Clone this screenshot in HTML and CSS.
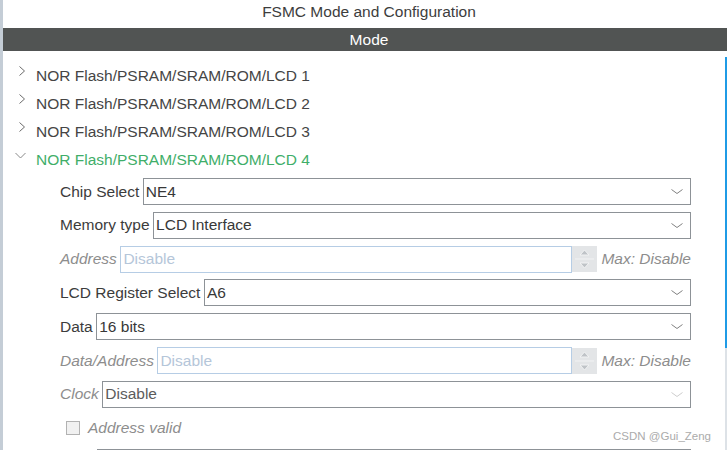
FILE: index.html
```html
<!DOCTYPE html>
<html lang="en">
<head>
  <meta charset="UTF-8">
  <title>FSMC Mode and Configuration</title>
  <link rel="stylesheet" href="styles.css">
</head>
<body>

<div class="panel">
  <div class="title">FSMC Mode and Configuration</div>
  <div class="bar">Mode</div>

  <div class="main">
    <div class="content">
      <ul class="tree">
        <li class="node">
          <svg class="caret" viewBox="0 0 12 12"><polyline points="4.5,0.5 9.5,5 4.5,9.5"/></svg>
          NOR Flash/PSRAM/SRAM/ROM/LCD 1
        </li>
        <li class="node">
          <svg class="caret" viewBox="0 0 12 12"><polyline points="4.5,0.5 9.5,5 4.5,9.5"/></svg>
          NOR Flash/PSRAM/SRAM/ROM/LCD 2
        </li>
        <li class="node">
          <svg class="caret" viewBox="0 0 12 12"><polyline points="4.5,0.5 9.5,5 4.5,9.5"/></svg>
          NOR Flash/PSRAM/SRAM/ROM/LCD 3
        </li>
        <li class="node open">
          <svg class="caret" viewBox="0 0 12 12"><polyline points="0.5,3 5.5,8 10.5,3"/></svg>
          NOR Flash/PSRAM/SRAM/ROM/LCD 4
        </li>
      </ul>

      <div class="form">
        <div class="row">
          <span class="label">Chip Select</span>
          <div class="select"><span>NE4</span><svg class="arrow" viewBox="0 0 12 5"><polyline points="0.5,0.5 6,4.5 11.5,0.5"/></svg></div>
        </div>
        <div class="row">
          <span class="label">Memory type</span>
          <div class="select"><span>LCD Interface</span><svg class="arrow" viewBox="0 0 12 5"><polyline points="0.5,0.5 6,4.5 11.5,0.5"/></svg></div>
        </div>
        <div class="row off">
          <span class="label">Address</span>
          <div class="input">Disable</div>
          <div class="spin">
            <svg viewBox="0 0 25 26"><polygon points="8,9 17,9 12.5,4"/><line x1="3" y1="13" x2="22" y2="13"/><polygon points="8,17 17,17 12.5,22"/></svg>
          </div>
          <span class="max">Max: Disable</span>
        </div>
        <div class="row">
          <span class="label">LCD Register Select</span>
          <div class="select"><span>A6</span><svg class="arrow" viewBox="0 0 12 5"><polyline points="0.5,0.5 6,4.5 11.5,0.5"/></svg></div>
        </div>
        <div class="row">
          <span class="label">Data</span>
          <div class="select"><span>16 bits</span><svg class="arrow" viewBox="0 0 12 5"><polyline points="0.5,0.5 6,4.5 11.5,0.5"/></svg></div>
        </div>
        <div class="row off">
          <span class="label">Data/Address</span>
          <div class="input">Disable</div>
          <div class="spin">
            <svg viewBox="0 0 25 26"><polygon points="8,9 17,9 12.5,4"/><line x1="3" y1="13" x2="22" y2="13"/><polygon points="8,17 17,17 12.5,22"/></svg>
          </div>
          <span class="max">Max: Disable</span>
        </div>
        <div class="row off">
          <span class="label">Clock</span>
          <div class="select"><span>Disable</span><svg class="arrow" viewBox="0 0 12 5"><polyline points="0.5,0.5 6,4.5 11.5,0.5"/></svg></div>
        </div>
        <div class="row off">
          <span class="check"></span>
          <span class="label">Address valid</span>
        </div>
        <!-- next field, only its top edge shows -->
        <div class="row">
          <span class="label spacer"></span>
          <div class="select"></div>
        </div>
      </div>
    </div>

    <div class="scroll"><div class="thumb"></div></div>
  </div>

  <div class="mark">CSDN @Gui_Zeng</div>
</div>

</body>
</html>
```

FILE: styles.css
```css
body {
  margin: 0;
  font-family: "Liberation Sans", Arial, sans-serif;
  font-size: 15.5px;
  color: #3c3c3c;
  background: #fff;
  overflow: hidden;
}

.panel {
  position: relative;
  height: 450px;
  overflow: hidden;
  border-left: 3px solid #c4cdd6;
}

.title {
  height: 28px;
  line-height: 24px;
  padding-left: 8px;
  text-align: center;
  color: #3d3d3d;
}

.bar {
  height: 23px;
  line-height: 23px;
  padding-left: 8px;
  text-align: center;
  background: #515453;
  color: #fff;
}

.main {
  display: flex;
}

.content {
  flex: 1;
  padding: 11px 34px 0 0;
}

/* tree */
.tree {
  list-style: none;
  margin: 0;
  padding: 0;
}

.node {
  display: flex;
  align-items: center;
  height: 28px;
  color: #454545;
}

.caret {
  width: 12px;
  height: 12px;
  margin: 0 9px 8px 12px;
  fill: none;
  stroke: #6b6b6b;
  stroke-width: 1;
}

.node.open {
  color: #3fae69;
}

.node.open .caret {
  stroke: #8a8a8a;
}

/* form */
.form {
  margin-top: 4px;
  padding-left: 57px;
}

.row {
  display: flex;
  align-items: center;
  height: 27px;
  margin-bottom: 6.83px;
}

.label {
  margin-right: 3.5px;
  white-space: nowrap;
}

.spacer {
  width: 33px;
}

.select, .input {
  flex: 1;
  display: flex;
  align-items: center;
  height: 27px;
  box-sizing: border-box;
  padding: 0 7px 0 2px;
  border: 1px solid #8d9297;
  color: #383838;
}

.select span {
  flex: 1;
}

.arrow {
  width: 12px;
  height: 5px;
  fill: none;
  stroke: #808080;
  stroke-width: 1;
}

.off .label,
.max {
  font-style: italic;
  color: #8d8d8d;
}

.input {
  border-color: #b6cde5;
  color: #b5c6d9;
}

.off .select {
  color: #5c5c5c;
}

.off .arrow {
  stroke: #cdcdcd;
}

.spin {
  width: 25px;
  height: 26px;
  background: #e3e5e7;
}

.spin svg {
  display: block;
  width: 25px;
  height: 26px;
  fill: #bfc3c7;
  stroke: #f2f3f4;
}

.max {
  margin-left: 4px;
  white-space: nowrap;
}

.check {
  width: 14px;
  height: 14px;
  box-sizing: border-box;
  margin: 0 8px 0 6px;
  border: 1px solid #b2b2b2;
  background: #f1f1f1;
}

/* scrollbar */
.scroll {
  width: 2px;
  height: 393px;
  margin-top: 6px;
  background: #dde2e7;
}

.thumb {
  height: 291px;
  background: #1f9be6;
}

.mark {
  position: absolute;
  right: 16px;
  top: 430px;
  font-size: 11.5px;
  color: #ababab;
}
```
